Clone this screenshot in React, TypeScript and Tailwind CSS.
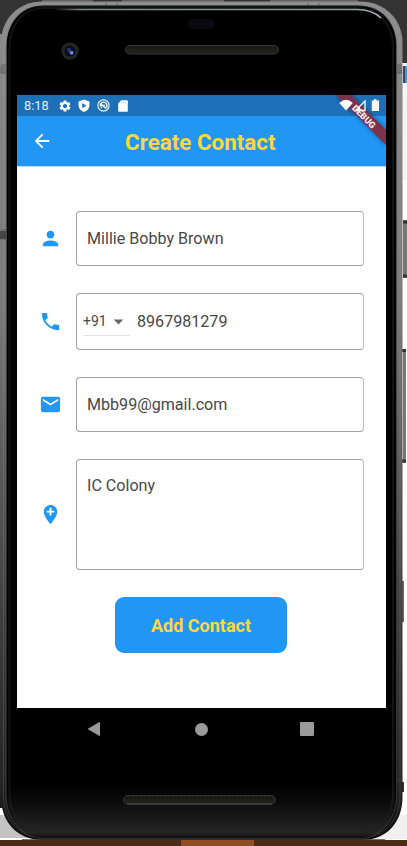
import React from "react";
import { MdAddLocation, MdArrowBack, MdArrowDropDown, MdEmail, MdPerson, MdPhone, MdSettings } from "react-icons/md";

function PhoneShell() {
  return (
    <svg className="absolute inset-0" width="407" height="846" viewBox="0 0 407 846" aria-hidden="true">
      <defs>
        <linearGradient id="metal" gradientUnits="userSpaceOnUse" x1="0" y1="0" x2="0" y2="840">
          <stop offset="0" stopColor="#8c8c8c" />
          <stop offset="0.35" stopColor="#7b7b7b" />
          <stop offset="0.55" stopColor="#5c5c5c" />
          <stop offset="0.75" stopColor="#3c3c3c" />
          <stop offset="0.93" stopColor="#252525" />
          <stop offset="1" stopColor="#0c0c0c" />
        </linearGradient>
        <linearGradient id="chin" x1="0" y1="0" x2="0" y2="1">
          <stop offset="0" stopColor="#000" />
          <stop offset="0.935" stopColor="#000" />
          <stop offset="0.955" stopColor="#0b0b0b" />
          <stop offset="0.98" stopColor="#1c1c1c" />
          <stop offset="0.992" stopColor="#262626" />
          <stop offset="1" stopColor="#080808" />
        </linearGradient>
        <linearGradient id="shine" gradientUnits="userSpaceOnUse" x1="53" y1="0" x2="381" y2="0">
          <stop offset="0" stopColor="#7d8989" stopOpacity="0" />
          <stop offset="0.08" stopColor="#7d8989" />
          <stop offset="0.9" stopColor="#8d9a9a" />
          <stop offset="1" stopColor="#aab4b4" />
        </linearGradient>
        <pattern id="mesh" width="4" height="6" patternUnits="userSpaceOnUse">
          <rect width="4" height="6" fill="#15140f" />
          <path d="M1 0V6M3 1V5" stroke="#2c2a25" strokeWidth="1" />
        </pattern>
      </defs>
      <rect width="407" height="63" fill="#333333" />
      <rect y="63" width="407" height="752" fill="#fff" />
      <rect x="400" y="63" width="7" height="117" fill="#f5f5f7" />
      <rect y="815" width="204" height="23" fill="#c3c3c3" />
      <rect x="204" y="815" width="203" height="24" fill="#f0f0f0" />
      <rect x="403" y="66" width="4" height="17" fill="#344b5c" />
      <rect x="405" y="66" width="2" height="17" fill="#2e9bdc" />
      <path d="M42 1H93M122 1H224M270 1H358" stroke="#909090" />

      <rect x="403" y="220" width="4" height="58" fill="#777" />
      <path d="M403 222H407M403 276H407" stroke="#333" strokeWidth="3" />
      <rect x="403" y="349" width="3" height="114" fill="#777" />
      <path d="M402 350.5H406M402 461H406" stroke="#333" strokeWidth="3" />
      <rect x="402" y="581" width="2" height="41" fill="#666" />
      <rect x="402" y="782" width="2" height="10" fill="#333" />
      <rect width="2" height="774" y="34" fill="url(#metal)" />

      <path d="M43 1.5H359C386 1.5 402.5 20 402.5 43V797C402.5 823 386 840 362 840H43C18 840 1 823 1 797V43C1 20 17 1.5 43 1.5Z" fill="url(#metal)" />
      <path d="M43 3.5H359C384 3.5 400 21 400 44V796C400 820 384 838 361 838H43C20 838 3.5 820 3.5 796V44C3.5 21 20 3.5 43 3.5Z" fill="none" stroke="#ababab" strokeWidth="1" opacity="0.2" />
      <path d="M43 5.5H358C382 5.5 396.5 23 396.5 46V796C396.5 819 381 839 360 839H43C22 839 6.5 819 6.5 796V46C6.5 23 21 5.5 43 5.5Z" fill="url(#chin)" />
      <path d="M43 6H358C381 6 396.5 23 396.5 46V796C396.5 819 381 838.5 360 838.5H43C22 838.5 6 819 6 796V46C6 23 21 6 43 6Z" fill="none" stroke="#777" strokeWidth="1" opacity="0.3" />
      <path d="M44 8H357C379 8 393 25 393 47V794C393 816 379 833 358 833H44C23 833 9.5 816 9.5 794V47C9.5 25 23 8 44 8Z" fill="none" stroke="#202020" strokeWidth="2" opacity="0.6" />
      <path d="M55 9.5H357Q372 9.5 381 18" fill="none" stroke="url(#shine)" strokeWidth="1.7" />
      <path d="M106 3V6M117 3V6M308 3V6M319 3V6M1 65H6M1 73H6M1 230H6M1 239H6M397 65H402M397 73H402M397 771H402M397 780H402" stroke="#444" opacity="0.6" />
      <rect x="0" y="66" width="6" height="7" fill="#666" opacity="0.6" />
      <rect x="397" y="66" width="5" height="7" fill="#555" opacity="0.5" />
      <rect x="0" y="231" width="6" height="8" fill="#444" />

      <circle cx="70" cy="51" r="8.7" fill="#242424" />
      <circle cx="70" cy="51" r="5.5" fill="#080c18" />
      <circle cx="69" cy="50" r="2.2" fill="#263570" />
      <circle cx="71.5" cy="52.8" r="2" fill="#5571df" />
      <circle cx="72" cy="53" r="0.8" fill="#acc1ff" />
      <rect x="188" y="19" width="27" height="10" rx="5" fill="#090a10" />
      <rect x="125.5" y="45.5" width="153" height="8.5" rx="4.25" fill="url(#mesh)" stroke="#373737" />
      <rect x="123.5" y="795.5" width="152" height="8.5" rx="4.25" fill="url(#mesh)" stroke="#333" />
      <path d="M127 804H272" stroke="#54564f" />
      <rect y="840" width="407" height="6" fill="#4b2b17" />
      <rect x="181" y="840" width="73" height="6" fill="#8f4d21" />
      <path d="M22 839.5H385" stroke="#3c3c3c" opacity="0.7" />
    </svg>
  );
}

function StatusBar() {
  return (
    <div className="flex h-[21px] shrink-0 items-center bg-[#1d70b7] pl-[7px] text-white">
      <span className="mt-[2px] w-[34px] text-[12.8px] leading-none text-[#e4eef7]">8:18</span>
      <MdSettings className="size-[14px] shrink-0" />
      <svg className="ml-[6px]" width="12" height="14" viewBox="0 0 12 14">
        <path d="M6 .6L11.4 2.6V6.5C11.4 9.8 9 12 6 13.1C3 12 .6 9.8 .6 6.5V2.6Z" fill="#fff" />
        <path d="M4.2 4.1L8.4 6.7L4.2 9.3Z" fill="#1d70b7" />
      </svg>
      <svg className="ml-[7px]" width="13" height="13" viewBox="0 0 13 13" fill="none" stroke="#e8f0f8">
        <circle cx="6.5" cy="6.5" r="5.6" strokeWidth="1.2" />
        <path d="M3.4 7.2A3.3 3.3 0 1 1 8.8 9M3.5 4.4L8.9 9.5M5 8.8A2 2 0 0 1 4.1 7.2" strokeWidth="1.4" />
        <circle cx="6.9" cy="6.6" r="1.1" fill="#e8f0f8" stroke="none" />
      </svg>
      <svg className="ml-[8px]" width="10" height="12" viewBox="0 0 10 12">
        <path d="M3.2 .3H9Q9.8 .3 9.8 1.1V10.9Q9.8 11.7 9 11.7H1Q.2 11.7 .2 10.9V3.4Z" fill="#fff" />
        <path d="M3.6 1.8V3.5M5.5 1.8V3.5M7.4 1.8V3.5" stroke="#a7c8e2" strokeWidth=".8" />
      </svg>
    </div>
  );
}

function DebugCorner() {
  return (
    <svg className="absolute right-0 top-0" width="55" height="60" viewBox="0 0 55 60">
      <defs>
        <filter id="ribbonShadow" x="-30%" y="-30%" width="160%" height="160%">
          <feDropShadow dx="0" dy="0" stdDeviation="2" floodColor="#000" floodOpacity="0.5" />
        </filter>
      </defs>
      <path d="M5 0H20L55 35V50Z" fill="#7b304b" filter="url(#ribbonShadow)" />
      <path d="M8.3 8Q15 1.5 21.8 8L15 15.4Z" fill="#fff" />
      <path d="M24.5 15.5L34 6V15.5Z" fill="none" stroke="#fff" strokeWidth="1.3" />
      <path d="M24 16L29 11V16Z" fill="#fff" />
      <path d="M42.8 4.2H45.5V5.5H48V16H40.8V5.5H42.8Z" fill="#fff" />
      <text x="33.2" y="24" transform="rotate(45 32.2 21)" textAnchor="middle" fontFamily="Roboto, sans-serif" fontSize="9" fontWeight="900" fill="#eee7eb">DEBUG</text>
    </svg>
  );
}

interface FieldProps {
  icon: React.ReactNode;
  height: string;
  children: React.ReactNode;
}

function Field({ icon, height, children }: FieldProps) {
  return (
    <div className={`flex items-center ${height}`}>
      <div className="flex w-[59px] justify-center pl-[8px] text-[#2196f3]">{icon}</div>
      <div className="h-full w-[288px] rounded-[4px] border border-[#a0a0a0] border-r-[#bdbdbd] text-[16.1px] leading-[20px] text-[#484848]">{children}</div>
    </div>
  );
}

export default function App() {
  return (
    <div className="relative h-[846px] w-[407px] overflow-hidden font-['Roboto',sans-serif]">
      <PhoneShell />
      <div className="relative flex flex-col pl-[17px] pt-[95px]">
        <main className="relative flex h-[613px] w-[369px] flex-col overflow-hidden bg-white">
          <StatusBar />
          <header className="flex h-[50px] shrink-0 items-center bg-[#2196f3] shadow-[0_1px_0_#bfdbf2]">
            <MdArrowBack className="ml-[14px] size-[22px] text-white" />
            <h1 className="ml-[72px] mt-[2px] whitespace-nowrap text-[22.4px] font-bold leading-none text-[#ffd740]">Create Contact</h1>
          </header>
          <form className="mt-[45px] flex flex-col gap-[27px]">
            <Field height="h-[55px]" icon={<MdPerson className="size-[23px]" />}>
              <div className="flex h-full items-center pl-[10px]">Millie Bobby Brown</div>
            </Field>
            <Field height="h-[57px]" icon={<MdPhone className="size-[23px]" />}>
              <div className="flex h-full items-center pl-[6px]">
                <div className="flex h-[29px] w-[47px] items-center border-b border-[#e4e4e4] text-[14px]">
                  <span>+91</span>
                  <MdArrowDropDown className="size-[23px] shrink-0 text-[#666]" />
                </div>
                <span className="ml-[7px]">8967981279</span>
              </div>
            </Field>
            <Field height="h-[55px]" icon={<MdEmail className="size-[23px]" />}>
              <div className="flex h-full items-center pl-[10px]">Mbb99@gmail.com</div>
            </Field>
            <Field height="h-[111px]" icon={<MdAddLocation className="size-[23px]" />}>
              <div className="pl-[10px] pt-[16px]">IC Colony</div>
            </Field>
            <button type="button" className="ml-[98px] h-[56px] w-[172px] rounded-[9px] bg-[#2196f3] text-[18px] font-bold text-[#ffd740]">Add Contact</button>
          </form>
          <DebugCorner />
        </main>
        <nav className="flex h-[42px] w-[369px] items-center pl-[70px]">
          <svg width="14" height="16" viewBox="0 0 14 16"><path d="M13 .8V15.2L.5 8Z" fill="#9a9a9a" /></svg>
          <div className="ml-[94px] size-[13px] rounded-full bg-[#9a9a9a]" />
          <div className="ml-[92px] size-[14px] rounded-[1px] bg-[#9a9a9a]" />
        </nav>
      </div>
    </div>
  );
}
